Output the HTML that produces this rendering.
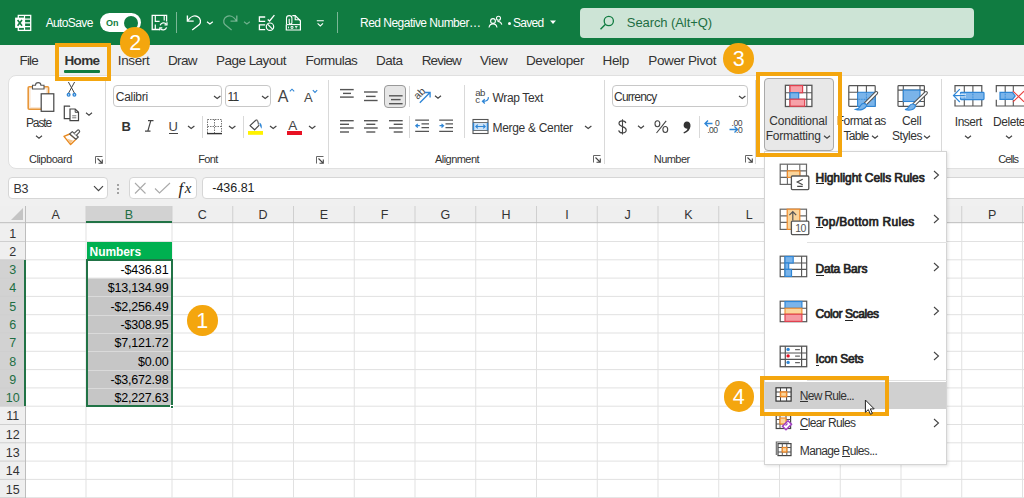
<!DOCTYPE html>
<html><head><meta charset="utf-8">
<style>
*{box-sizing:border-box;margin:0;padding:0}
html,body{width:1024px;height:498px;overflow:hidden;background:#f0f0f0;font-family:"Liberation Sans",sans-serif;color:#222;position:relative}
.a{position:absolute}
.t{position:absolute;white-space:nowrap;line-height:normal}
svg{overflow:visible}
</style></head><body>
<div class="a" style="left:0px;top:0px;width:1024px;height:45.3px;background:#107c41"></div>
<svg class="a" style="left:14px;top:14px" width="18" height="18" viewBox="0 0 18 18">
<rect x="4.3" y="1.4" width="12.4" height="15" fill="none" stroke="#ffffff" stroke-width="1.3"/>
<path d="M10.5 1.4V16.4 M4.3 5.1H16.7 M4.3 8.8H16.7 M4.3 12.6H16.7" stroke="#ffffff" stroke-width="1.2"/>
<rect x="1.1" y="3.6" width="9.4" height="10.3" fill="#ffffff"/>
<path d="M3.6 5.9L8 11.7 M8 5.9L3.6 11.7" stroke="#107c41" stroke-width="1.6"/>
</svg>
<div class="t" style="left:45.70px;top:16.00px;font-size:12px;letter-spacing:-0.630px;color:#ffffff;">AutoSave</div>
<div class="a" style="left:99.7px;top:12.8px;width:41px;height:19px;background:#fff;border-radius:9.5px"></div>
<div class="a" style="left:124px;top:15.7px;width:14px;height:14px;background:#107c41;border-radius:50%"></div>
<div class="t" style="left:106.00px;top:18.00px;font-size:9px;letter-spacing:-0.098px;color:#107c41;font-weight:bold;">On</div>
<svg class="a" style="left:151px;top:14px" width="18" height="18" viewBox="0 0 18 18">
<path d="M9 15.5H1.2V1.3H15.6V7.6" fill="none" stroke="#ffffff" stroke-width="1.3"/>
<path d="M4.3 1.3V7.3H8.6 M13.2 1.3V6.4 M4.3 10.4V15.5" fill="none" stroke="#ffffff" stroke-width="1.2"/>
<path d="M9.2 11.2A3.6 3.6 0 0 1 15.4 10.2 M15.6 13.4A3.6 3.6 0 0 1 9.4 14.6" fill="none" stroke="#ffffff" stroke-width="1.3"/>
<path d="M16 8.3V10.8H13.5 M8.8 16.3V13.8H11.3" fill="none" stroke="#ffffff" stroke-width="1.2"/>
</svg>
<div class="a" style="left:176.2px;top:11.8px;width:1px;height:21.5px;background:rgba(255,255,255,.45)"></div>
<svg class="a" style="left:185px;top:14px" width="18" height="18" viewBox="0 0 18 18">
<path d="M2.4 1.6V7.1H8.7" fill="none" stroke="#ffffff" stroke-width="1.4"/>
<path d="M2.9 6.6C5.3 2.8 9.2 0.9 12.6 2.6C15.8 4.3 16.3 8.2 14.3 10.6L7.2 16" fill="none" stroke="#ffffff" stroke-width="1.3"/>
</svg>
<svg class="a" style="left:206.1px;top:19.700000000000003px" width="7.8" height="5.8" viewBox="0 0 7.8 5.8"><path d="M1 1.74 L3.90 4.06 L6.80 1.74" fill="none" stroke="#ffffff" stroke-width="1.2"/></svg>
<svg class="a" style="left:222px;top:14px" width="18" height="18" viewBox="0 0 18 18">
<path d="M14.8 1.6V7.1H8.5" fill="none" stroke="rgba(255,255,255,.4)" stroke-width="1.4"/>
<path d="M14.3 6.6C11.9 2.8 8 0.9 4.6 2.6C1.4 4.3 0.9 8.2 2.9 10.6L9.6 16" fill="none" stroke="rgba(255,255,255,.4)" stroke-width="1.3"/>
</svg>
<svg class="a" style="left:242.7px;top:19.700000000000003px" width="7.8" height="5.8" viewBox="0 0 7.8 5.8"><path d="M1 1.74 L3.90 4.06 L6.80 1.74" fill="none" stroke="rgba(255,255,255,.4)" stroke-width="1.2"/></svg>
<svg class="a" style="left:258px;top:14px" width="18" height="18" viewBox="0 0 18 18">
<path d="M7.2 3H1.4V7.4H7.2" fill="none" stroke="#ffffff" stroke-width="1.3"/>
<path d="M9.7 5.5L11.6 7L16.4 1.2" fill="none" stroke="#ffffff" stroke-width="1.3"/>
<path d="M7.2 10.9H1.4V15.6H7.2" fill="none" stroke="#ffffff" stroke-width="1.3"/>
<circle cx="12" cy="12.7" r="3.7" fill="none" stroke="#ffffff" stroke-width="1.2"/>
<path d="M9.5 10.2L14.5 15.2" stroke="#ffffff" stroke-width="1.2"/>
</svg>
<svg class="a" style="left:285px;top:14px" width="17" height="18" viewBox="0 0 17 18">
<path d="M7.3 1.6H10.2L15.4 6.8V16H1.3V10.6" fill="none" stroke="#ffffff" stroke-width="1.2"/>
<path d="M10.2 1.6V5.8H15.2" fill="none" stroke="#ffffff" stroke-width="1.1"/>
<path d="M1.5 10V4.3A2.7 2.7 0 0 1 6.9 4.3V8.8A1.35 1.35 0 0 1 4.2 8.8V4.8" fill="none" stroke="#ffffff" stroke-width="1.1"/>
<path d="M1.3 10.6H15.4" stroke="#ffffff" stroke-width="1.1"/>
<path d="M3.5 12.6V14.3 M6 12.5H8V14.3H6Z M10 12.6H12.5 M11.2 12.6V14.4" fill="none" stroke="#ffffff" stroke-width="0.9"/>
</svg>
<svg class="a" style="left:316px;top:18px" width="9" height="10" viewBox="0 0 9 10"><path d="M0.8 2.8H7.8 M1.6 5.4L4.3 8L7 5.4" fill="none" stroke="#ffffff" stroke-width="1.1"/></svg>
<div class="a" style="left:336.5px;top:11.8px;width:1px;height:21.5px;background:rgba(255,255,255,.45)"></div>
<div class="t" style="left:360.00px;top:16.00px;font-size:12px;letter-spacing:-0.516px;color:#ffffff;">Red Negative Number…</div>
<svg class="a" style="left:488px;top:15px" width="15" height="14" viewBox="0 0 15 14">
<circle cx="5" cy="6" r="2.4" fill="none" stroke="#ffffff" stroke-width="1.1"/>
<path d="M1 12.5C1.5 9.8 3 8.9 5 8.9S8.5 9.8 9 12.5" fill="none" stroke="#ffffff" stroke-width="1.1"/>
<circle cx="10.5" cy="3.2" r="2" fill="none" stroke="#ffffff" stroke-width="1.1"/>
<path d="M9.5 6.5C11.8 6.3 13.3 7.3 13.8 9.6" fill="none" stroke="#ffffff" stroke-width="1.1"/>
</svg>
<div class="a" style="left:507.5px;top:21.5px;width:3px;height:3px;background:#fff;border-radius:50%"></div>
<div class="t" style="left:513.00px;top:16.00px;font-size:12px;letter-spacing:-0.685px;color:#ffffff;">Saved</div>
<svg class="a" style="left:549px;top:19px" width="8" height="6" viewBox="0 0 8 6"><path d="M1 1.5H7L4 5Z" fill="#ffffff"/></svg>
<div class="a" style="left:579.8px;top:7.5px;width:394.6px;height:30.2px;background:#cde4d6;border-radius:4px"></div>
<svg class="a" style="left:599px;top:15px" width="16" height="16" viewBox="0 0 16 16">
<circle cx="9.8" cy="6" r="4.6" fill="none" stroke="#107c41" stroke-width="1.3"/>
<path d="M6.5 9.3L1.5 14.3" stroke="#107c41" stroke-width="1.4"/>
</svg>
<div class="t" style="left:626.80px;top:15.00px;font-size:13px;letter-spacing:-0.081px;color:#1e6e43;">Search (Alt+Q)</div>
<div class="t" style="left:19.50px;top:53.00px;font-size:13.5px;letter-spacing:-0.864px;color:#333;">File</div>
<div class="t" style="left:64.50px;top:53.00px;font-size:13.5px;letter-spacing:-0.627px;color:#333;font-weight:bold;">Home</div>
<div class="t" style="left:117.80px;top:53.00px;font-size:13.5px;letter-spacing:-0.360px;color:#333;">Insert</div>
<div class="t" style="left:168.00px;top:53.00px;font-size:13.5px;letter-spacing:-0.626px;color:#333;">Draw</div>
<div class="t" style="left:216.00px;top:53.00px;font-size:13.5px;letter-spacing:-0.528px;color:#333;">Page Layout</div>
<div class="t" style="left:305.50px;top:53.00px;font-size:13.5px;letter-spacing:-0.558px;color:#333;">Formulas</div>
<div class="t" style="left:376.00px;top:53.00px;font-size:13.5px;letter-spacing:-0.479px;color:#333;">Data</div>
<div class="t" style="left:421.70px;top:53.00px;font-size:13.5px;letter-spacing:-0.828px;color:#333;">Review</div>
<div class="t" style="left:480.00px;top:53.00px;font-size:13.5px;letter-spacing:-0.405px;color:#333;">View</div>
<div class="t" style="left:526.00px;top:53.00px;font-size:13.5px;letter-spacing:-0.393px;color:#333;">Developer</div>
<div class="t" style="left:602.60px;top:53.00px;font-size:13.5px;letter-spacing:-0.391px;color:#333;">Help</div>
<div class="t" style="left:648.30px;top:53.00px;font-size:13.5px;letter-spacing:-0.393px;color:#333;">Power Pivot</div>
<div class="a" style="left:64px;top:70.4px;width:36px;height:2.6px;background:#107c41;border-radius:1px"></div>
<div class="a" style="left:8px;top:75px;width:1040px;height:93.5px;background:#fff;border:1px solid #e0e0e0;border-radius:8px"></div>
<svg class="a" style="left:26px;top:81px" width="30" height="32" viewBox="0 0 30 32">
<rect x="2.2" y="5.8" width="20.4" height="22.5" rx="1" fill="#fbe7d3" stroke="#e8973a" stroke-width="1.6"/>
<rect x="4.6" y="8" width="15.6" height="18" fill="#fff"/>
<path d="M6.5 8V4.3H9.5a2.7 2.7 0 0 1 5.4 0H18V8Z" fill="#fff" stroke="#555" stroke-width="1.1"/>
<rect x="15.2" y="12.8" width="12.6" height="17.5" fill="#fff" stroke="#444" stroke-width="1.2"/>
</svg>
<div class="t" style="left:26.00px;top:116.00px;font-size:12px;letter-spacing:-1.137px;color:#333;">Paste</div>
<svg class="a" style="left:34.5px;top:133.6px" width="8" height="6" viewBox="0 0 8 6"><path d="M1 1.80 L4.00 4.20 L7.00 1.80" fill="none" stroke="#444" stroke-width="1.1"/></svg>
<svg class="a" style="left:65px;top:82px" width="13" height="15" viewBox="0 0 13 15">
<path d="M3.6 11L9.6 0 M9.4 11L3.4 0" stroke="#444" stroke-width="1"/>
<circle cx="3.6" cy="12.8" r="2" fill="#2f86d6"/><circle cx="9.4" cy="12.8" r="2" fill="#2f86d6"/>
<circle cx="3.6" cy="12.8" r="0.6" fill="#fff"/><circle cx="9.4" cy="12.8" r="0.6" fill="#fff"/>
</svg>
<svg class="a" style="left:63px;top:105px" width="17" height="17" viewBox="0 0 17 17">
<path d="M7 13.6H1.3V1.2H6.5L7 1.7" fill="none" stroke="#444" stroke-width="1.2"/>
<path d="M7 4H12.2L15.5 7.3V15.7H7Z" fill="#fff" stroke="#444" stroke-width="1.2"/>
<path d="M12.2 4V7.3H15.5" fill="none" stroke="#444" stroke-width="1"/>
<path d="M9.2 10.8H13.3 M9.2 12.8H13.3" stroke="#666" stroke-width="0.9"/>
</svg>
<svg class="a" style="left:85px;top:110.8px" width="8" height="6" viewBox="0 0 8 6"><path d="M1 1.80 L4.00 4.20 L7.00 1.80" fill="none" stroke="#444" stroke-width="1.1"/></svg>
<svg class="a" style="left:63px;top:129px" width="17" height="17" viewBox="0 0 17 17">
<path d="M1 7.4L6.7 5L12.9 10.3L7.6 15.6Z" fill="#fff" stroke="#e8891f" stroke-width="1.4" stroke-linejoin="round"/>
<path d="M3.5 9.5L10 11.5L7.6 14.5Z" fill="#f5c48a"/>
<path d="M6.7 5L9.3 2.6L15.3 8L12.9 10.3Z" fill="#fff" stroke="#555" stroke-width="1.2" stroke-linejoin="round"/>
<path d="M11.2 4.4L14.3 1.4A1.3 1.3 0 0 1 16.2 3.3L13.3 6.3" fill="#fff" stroke="#555" stroke-width="1.2"/>
</svg>
<div class="t" style="left:28.90px;top:153.00px;font-size:11px;letter-spacing:-0.453px;color:#333;">Clipboard</div>
<svg class="a" style="left:95px;top:155.5px" width="8" height="8" viewBox="0 0 8 8"><path d="M0.5 7.5V0.5H7.5" fill="none" stroke="#666" stroke-width="1"/><path d="M2.5 2.5L7 7 M3.5 7.3H7.3V3.5" fill="none" stroke="#444" stroke-width="1.1"/></svg>
<div class="a" style="left:104.5px;top:80px;width:1px;height:83.5px;background:#d9d9d9"></div>
<div class="a" style="left:113.3px;top:85.4px;width:109px;height:22px;background:#fff;border:1px solid #c8c8c8;border-radius:4px"></div>
<div class="t" style="left:115.80px;top:90.00px;font-size:12px;letter-spacing:-0.287px;color:#333;">Calibri</div>
<svg class="a" style="left:212.8px;top:94.1px" width="8.4" height="6.4" viewBox="0 0 8.4 6.4"><path d="M1 1.92 L4.20 4.48 L7.40 1.92" fill="none" stroke="#444" stroke-width="1.2"/></svg>
<div class="a" style="left:224.5px;top:85.4px;width:46.7px;height:22px;background:#fff;border:1px solid #c8c8c8;border-radius:4px"></div>
<div class="t" style="left:227.40px;top:90.00px;font-size:12px;letter-spacing:-0.728px;color:#333;">11</div>
<svg class="a" style="left:261.40000000000003px;top:94.1px" width="8.4" height="6.4" viewBox="0 0 8.4 6.4"><path d="M1 1.92 L4.20 4.48 L7.40 1.92" fill="none" stroke="#444" stroke-width="1.2"/></svg>
<div class="t" style="left:277.80px;top:88.00px;font-size:16px;letter-spacing:0.000px;color:#444;">A</div>
<svg class="a" style="left:288.5px;top:87.5px" width="6" height="4" viewBox="0 0 6 4"><path d="M0.8 3.4L3 1.2L5.2 3.4" fill="none" stroke="#2f86d6" stroke-width="1.1"/></svg>
<div class="t" style="left:304.00px;top:90.00px;font-size:13px;letter-spacing:0.000px;color:#444;">A</div>
<svg class="a" style="left:312px;top:88.5px" width="6" height="4" viewBox="0 0 6 4"><path d="M0.8 1.2L3 3.4L5.2 1.2" fill="none" stroke="#2f86d6" stroke-width="1.1"/></svg>
<div class="t" style="left:121.50px;top:119.00px;font-size:13px;letter-spacing:0.000px;color:#333;font-weight:bold;">B</div>
<svg class="a" style="left:143px;top:119px" width="12" height="14" viewBox="0 0 12 14"><path d="M5 1.6H10.5 M2 12.2H7.5 M7.8 1.6L4.8 12.2" fill="none" stroke="#444" stroke-width="1.2"/></svg>
<div class="t" style="left:168.60px;top:119.00px;font-size:13px;letter-spacing:0.000px;color:#444;">U</div>
<div class="a" style="left:168.6px;top:132.6px;width:9px;height:1px;background:#444"></div>
<svg class="a" style="left:186.8px;top:124.1px" width="8.4" height="6.4" viewBox="0 0 8.4 6.4"><path d="M1 1.92 L4.20 4.48 L7.40 1.92" fill="none" stroke="#444" stroke-width="1.2"/></svg>
<div class="a" style="left:201.6px;top:116.4px;width:1px;height:22.0px;background:#d9d9d9"></div>
<svg class="a" style="left:206px;top:118px" width="17" height="17" viewBox="0 0 17 17">
<rect x="1.5" y="1.5" width="14" height="14" fill="none" stroke="#777" stroke-width="1" stroke-dasharray="1.5 1"/>
<path d="M8.5 1.5V15.5 M1.5 8.5H15.5" stroke="#777" stroke-width="1" stroke-dasharray="1.5 1"/>
<path d="M1 15.6H16" stroke="#333" stroke-width="1.4"/>
</svg>
<svg class="a" style="left:228.20000000000002px;top:124.1px" width="8.4" height="6.4" viewBox="0 0 8.4 6.4"><path d="M1 1.92 L4.20 4.48 L7.40 1.92" fill="none" stroke="#444" stroke-width="1.2"/></svg>
<div class="a" style="left:242.5px;top:116.4px;width:1px;height:22.0px;background:#d9d9d9"></div>
<svg class="a" style="left:247px;top:119px" width="18" height="17" viewBox="0 0 18 17">
<path d="M8.8 1.2L3 6.6L7.6 10.8L12.2 6.2" fill="#fff" stroke="#444" stroke-width="1.2" stroke-linejoin="round"/>
<path d="M8.8 1.2C10 0.6 11.2 2 11.6 5.6" fill="none" stroke="#777" stroke-width="1.4"/>
<path d="M12.4 3.8C14.6 4.4 15.2 7.4 14.5 9.8C13.6 8.2 12.6 6.4 12.4 3.8Z" fill="#2f86d6"/>
<rect x="1" y="12" width="15" height="3.8" fill="#fff200"/>
</svg>
<svg class="a" style="left:268.8px;top:124.1px" width="8.4" height="6.4" viewBox="0 0 8.4 6.4"><path d="M1 1.92 L4.20 4.48 L7.40 1.92" fill="none" stroke="#444" stroke-width="1.2"/></svg>
<div class="t" style="left:288.30px;top:118.00px;font-size:13.5px;letter-spacing:0.000px;color:#444;">A</div>
<div class="a" style="left:287px;top:131.3px;width:15px;height:3.6px;background:#e81123"></div>
<svg class="a" style="left:307.8px;top:124.1px" width="8.4" height="6.4" viewBox="0 0 8.4 6.4"><path d="M1 1.92 L4.20 4.48 L7.40 1.92" fill="none" stroke="#444" stroke-width="1.2"/></svg>
<div class="t" style="left:198.20px;top:153.00px;font-size:11px;letter-spacing:-0.602px;color:#333;">Font</div>
<svg class="a" style="left:316px;top:155.5px" width="8" height="8" viewBox="0 0 8 8"><path d="M0.5 7.5V0.5H7.5" fill="none" stroke="#666" stroke-width="1"/><path d="M2.5 2.5L7 7 M3.5 7.3H7.3V3.5" fill="none" stroke="#444" stroke-width="1.1"/></svg>
<div class="a" style="left:327.5px;top:80px;width:1px;height:83.5px;background:#d9d9d9"></div>
<svg class="a" style="left:340px;top:0px" width="16" height="200" viewBox="0 0 16 200"><path d="M0 89.6H13.7" stroke="#555" stroke-width="1.4"/><path d="M3 93.4H11" stroke="#555" stroke-width="1.4"/><path d="M0 97.1H13.7" stroke="#555" stroke-width="1.4"/></svg>
<svg class="a" style="left:364.2px;top:0px" width="16" height="200" viewBox="0 0 16 200"><path d="M0 92H13.6" stroke="#555" stroke-width="1.4"/><path d="M2 96.4H11.6" stroke="#555" stroke-width="1.4"/><path d="M0 100.5H13.6" stroke="#555" stroke-width="1.4"/></svg>
<div class="a" style="left:384.4px;top:85.4px;width:22.1px;height:22.3px;background:#e6e6e6;border:1px solid #999;border-radius:4px"></div>
<svg class="a" style="left:388.8px;top:0px" width="16" height="200" viewBox="0 0 16 200"><path d="M0 95.8H13.6" stroke="#555" stroke-width="1.4"/><path d="M2 99.6H11.6" stroke="#555" stroke-width="1.4"/><path d="M0 103.7H13.6" stroke="#555" stroke-width="1.4"/></svg>
<div class="a" style="left:409px;top:86px;width:1px;height:21px;background:#d9d9d9"></div>
<svg class="a" style="left:413px;top:86px" width="20" height="19" viewBox="0 0 20 19">
<text x="6.5" y="11" font-size="10.5" font-family="Liberation Sans" fill="#444" text-anchor="middle" transform="rotate(-45 6.5 7.5)">ab</text>
<path d="M6.8 16.8L16.8 6.8 M12 6.5H17.1V11.6" fill="none" stroke="#2f86d6" stroke-width="1.3"/>
</svg>
<svg class="a" style="left:434.2px;top:93.8px" width="8" height="6" viewBox="0 0 8 6"><path d="M1 1.80 L4.00 4.20 L7.00 1.80" fill="none" stroke="#444" stroke-width="1.2"/></svg>
<svg class="a" style="left:340px;top:0px" width="16" height="200" viewBox="0 0 16 200"><path d="M0 120.7H13.7" stroke="#555" stroke-width="1.4"/><path d="M0 124.3H9" stroke="#555" stroke-width="1.4"/><path d="M0 128H13.7" stroke="#555" stroke-width="1.4"/><path d="M0 132H9" stroke="#555" stroke-width="1.4"/></svg>
<svg class="a" style="left:364.2px;top:0px" width="16" height="200" viewBox="0 0 16 200"><path d="M0 120.7H13.7" stroke="#555" stroke-width="1.4"/><path d="M2.3 124.3H11.3" stroke="#555" stroke-width="1.4"/><path d="M0 128H13.7" stroke="#555" stroke-width="1.4"/><path d="M2.3 132H11.3" stroke="#555" stroke-width="1.4"/></svg>
<svg class="a" style="left:388.8px;top:0px" width="16" height="200" viewBox="0 0 16 200"><path d="M0 120.7H13.7" stroke="#555" stroke-width="1.4"/><path d="M4.7 124.3H13.7" stroke="#555" stroke-width="1.4"/><path d="M0 128H13.7" stroke="#555" stroke-width="1.4"/><path d="M4.7 132H13.7" stroke="#555" stroke-width="1.4"/></svg>
<div class="a" style="left:409px;top:115.6px;width:1px;height:22.700000000000017px;background:#d9d9d9"></div>
<svg class="a" style="left:414px;top:118px" width="17" height="16" viewBox="0 0 17 16">
<path d="M1.2 2.2H15 M7.5 5.8H15 M7.5 9.6H15 M1.2 13.3H15" stroke="#555" stroke-width="1.2"/>
<path d="M1.8 7.7H5.8 M3.8 5.9L1.8 7.7L3.8 9.5" fill="none" stroke="#2f86d6" stroke-width="1.2"/>
</svg>
<svg class="a" style="left:438px;top:118px" width="17" height="16" viewBox="0 0 17 16">
<path d="M1.2 2.2H15 M7.5 5.8H15 M7.5 9.6H15 M1.2 13.3H15" stroke="#555" stroke-width="1.2"/>
<path d="M1.5 7.7H5.5 M3.5 5.9L5.5 7.7L3.5 9.5" fill="none" stroke="#2f86d6" stroke-width="1.2"/>
</svg>
<div class="a" style="left:463.7px;top:85.4px;width:1px;height:52.599999999999994px;background:#d9d9d9"></div>
<svg class="a" style="left:474px;top:89px" width="17" height="16" viewBox="0 0 17 16">
<text x="1.2" y="7.4" font-size="9.6" font-family="Liberation Sans" fill="#444" letter-spacing="-0.4">ab</text>
<text x="1.2" y="14.4" font-size="9.6" font-family="Liberation Sans" fill="#444">c</text>
<path d="M14.3 8.2C14.8 10.8 12.6 12.6 9 12.3 M10.8 10.2L8.5 12.3L10.8 14.4" fill="none" stroke="#2f86d6" stroke-width="1.3"/>
</svg>
<div class="t" style="left:492.50px;top:91.00px;font-size:12px;letter-spacing:-0.342px;color:#333;">Wrap Text</div>
<svg class="a" style="left:472px;top:118px" width="17" height="17" viewBox="0 0 17 17">
<rect x="1" y="1.5" width="15" height="14" fill="#fff" stroke="#555" stroke-width="1.1"/>
<path d="M1 4.5H16 M1 12.5H16" stroke="#555" stroke-width="1"/>
<rect x="1.5" y="4.8" width="14" height="7.4" fill="#cfe3f6"/>
<path d="M1.5 4.8V12.2 M15.5 4.8V12.2" stroke="#2f86d6" stroke-width="1.4"/>
<path d="M4 8.5H13 M5.8 6.6L3.8 8.5L5.8 10.4 M11.2 6.6L13.2 8.5L11.2 10.4" fill="none" stroke="#2f86d6" stroke-width="1.1"/>
</svg>
<div class="t" style="left:492.50px;top:121.00px;font-size:12px;letter-spacing:-0.315px;color:#333;">Merge &amp; Center</div>
<svg class="a" style="left:583.8px;top:124.1px" width="8.4" height="6.4" viewBox="0 0 8.4 6.4"><path d="M1 1.92 L4.20 4.48 L7.40 1.92" fill="none" stroke="#444" stroke-width="1.2"/></svg>
<div class="t" style="left:435.00px;top:153.00px;font-size:11px;letter-spacing:-0.546px;color:#333;">Alignment</div>
<svg class="a" style="left:593px;top:155.3px" width="8" height="8" viewBox="0 0 8 8"><path d="M0.5 7.5V0.5H7.5" fill="none" stroke="#666" stroke-width="1"/><path d="M2.5 2.5L7 7 M3.5 7.3H7.3V3.5" fill="none" stroke="#444" stroke-width="1.1"/></svg>
<div class="a" style="left:603.5px;top:80px;width:1px;height:83.5px;background:#d9d9d9"></div>
<div class="a" style="left:612.3px;top:85.4px;width:136.2px;height:21.7px;background:#fff;border:1px solid #c8c8c8;border-radius:4px"></div>
<div class="t" style="left:614.00px;top:90.00px;font-size:12px;letter-spacing:-0.760px;color:#333;">Currency</div>
<svg class="a" style="left:738.3px;top:94.1px" width="8.4" height="6.4" viewBox="0 0 8.4 6.4"><path d="M1 1.92 L4.20 4.48 L7.40 1.92" fill="none" stroke="#444" stroke-width="1.2"/></svg>
<svg class="a" style="left:616px;top:118px" width="13" height="18" viewBox="0 0 13 18">
<path d="M9.8 5.2C9.5 3.5 8.2 2.9 6.4 2.9C4.4 2.9 3 3.9 3 5.6C3 9.3 10.2 7.9 10.2 12C10.2 13.9 8.6 14.9 6.5 14.9C4.4 14.9 3 14 2.7 12.3" fill="none" stroke="#444" stroke-width="1.15"/>
<path d="M6.5 1.3V16.5" stroke="#444" stroke-width="1.1"/>
</svg>
<svg class="a" style="left:636.6px;top:124px" width="8" height="6" viewBox="0 0 8 6"><path d="M1 1.80 L4.00 4.20 L7.00 1.80" fill="none" stroke="#444" stroke-width="1.2"/></svg>
<svg class="a" style="left:654px;top:120px" width="15" height="14" viewBox="0 0 15 14">
<ellipse cx="3.4" cy="3.7" rx="2.4" ry="3" fill="none" stroke="#444" stroke-width="1.1"/>
<ellipse cx="11.3" cy="9.5" rx="2.4" ry="3" fill="none" stroke="#444" stroke-width="1.1"/>
<path d="M12.2 0.8L2.5 13" stroke="#444" stroke-width="1.1"/>
</svg>
<svg class="a" style="left:681px;top:120px" width="11" height="15" viewBox="0 0 11 15">
<path d="M5.8 1.5C8.2 1.5 9.8 3.2 9.5 6.2C9.2 9.5 6.8 12.3 3 13.5L2.4 12.6C4.8 11.4 6.2 10 6.5 8.8C4.2 8.8 2.6 7.2 2.6 5.2C2.6 3 4 1.5 5.8 1.5Z" fill="#333"/>
</svg>
<div class="a" style="left:699.4px;top:116px;width:1px;height:22px;background:#d9d9d9"></div>
<svg class="a" style="left:703px;top:118px" width="19" height="17" viewBox="0 0 19 17">
<path d="M2 5.5H9.5 M5 2.5L2 5.5L5 8.5" fill="none" stroke="#2f86d6" stroke-width="1.4"/>
<text x="12" y="7.6" font-size="8.6" font-family="Liberation Sans" fill="#444">0</text>
<text x="4.2" y="15.2" font-size="8.6" font-family="Liberation Sans" fill="#444" letter-spacing="-0.5">.00</text>
</svg>
<svg class="a" style="left:728px;top:118px" width="19" height="17" viewBox="0 0 19 17">
<text x="3.5" y="7.6" font-size="8.6" font-family="Liberation Sans" fill="#444" letter-spacing="-0.5">.00</text>
<path d="M1.5 11.5H9.5 M6.5 8.5L9.5 11.5L6.5 14.5" fill="none" stroke="#2f86d6" stroke-width="1.4"/>
<text x="8" y="15.2" font-size="8.6" font-family="Liberation Sans" fill="#444" letter-spacing="-0.5">.0</text>
</svg>
<div class="t" style="left:653.80px;top:153.00px;font-size:11px;letter-spacing:-0.553px;color:#333;">Number</div>
<svg class="a" style="left:745px;top:155.3px" width="8" height="8" viewBox="0 0 8 8"><path d="M0.5 7.5V0.5H7.5" fill="none" stroke="#666" stroke-width="1"/><path d="M2.5 2.5L7 7 M3.5 7.3H7.3V3.5" fill="none" stroke="#444" stroke-width="1.1"/></svg>
<div class="a" style="left:755px;top:80px;width:1px;height:83.5px;background:#d9d9d9"></div>
<div class="a" style="left:764.2px;top:77.5px;width:69.8px;height:73px;background:#e8e8e8;border:1px solid #aaa;border-radius:4px"></div>
<svg class="a" style="left:784px;top:84px" width="29" height="23" viewBox="0 0 29 23">
<rect x="1.4" y="1.3" width="26.5" height="21.2" fill="#fff" stroke="#555" stroke-width="1.3"/>
<path d="M6 1.3V22.5 M22.8 1.3V22.5 M1.4 8.7H27.9 M1.4 15.2H27.9" stroke="#555" stroke-width="1.1"/>
<rect x="6" y="1.6" width="12.6" height="7.1" fill="#f7a1a8" stroke="#e0414f" stroke-width="1.2"/>
<rect x="6" y="8.7" width="8.7" height="6.5" fill="#7ab4ea" stroke="#2f86d6" stroke-width="1.2"/>
<rect x="6" y="15.2" width="14.7" height="7" fill="#f7a1a8" stroke="#e0414f" stroke-width="1.2"/>
</svg>
<div class="t" style="left:769.20px;top:114.00px;font-size:12px;letter-spacing:-0.185px;color:#333;">Conditional</div>
<div class="t" style="left:765.70px;top:129.00px;font-size:12px;letter-spacing:-0.245px;color:#333;">Formatting</div>
<svg class="a" style="left:822.5px;top:133.5px" width="8" height="6" viewBox="0 0 8 6"><path d="M1 1.80 L4.00 4.20 L7.00 1.80" fill="none" stroke="#444" stroke-width="1.2"/></svg>
<svg class="a" style="left:848px;top:84px" width="31" height="28" viewBox="0 0 31 28">
<rect x="0.8" y="1.7" width="26.4" height="20.7" rx="0.8" fill="#fff" stroke="#555" stroke-width="1.2"/>
<rect x="9.6" y="8.3" width="17.6" height="14.1" fill="#7ab4ea" stroke="#2f86d6" stroke-width="1.1"/>
<path d="M9.6 1.7V8.3 M18.4 1.7V8.3 M0.8 8.3H9.6 M0.8 15.3H9.6" stroke="#555" stroke-width="1.1"/>
<path d="M18.4 8.3V22.4 M9.6 15.3H27.2" stroke="#2f86d6" stroke-width="0.9" stroke-dasharray="1 0.6"/>
<path d="M28.3 8.9L17.6 19.6" stroke="#555" stroke-width="3.8" stroke-linecap="round"/>
<path d="M28.3 8.9L17.6 19.6" stroke="#fff" stroke-width="1.6" stroke-linecap="round"/>
<path d="M18.8 21.2C17.4 18.6 13.8 18.8 12.6 21.4C11.6 23.6 10.2 24.8 7.8 25.4C12 26.6 17.8 25.6 18.8 21.2Z" fill="#7ab4ea" stroke="#2f86d6" stroke-width="1.1"/>
</svg>
<div class="t" style="left:836.80px;top:114.00px;font-size:12px;letter-spacing:-0.557px;color:#333;">Format as</div>
<div class="t" style="left:843.50px;top:129.00px;font-size:12px;letter-spacing:-0.737px;color:#333;">Table</div>
<svg class="a" style="left:871px;top:133.5px" width="8" height="6" viewBox="0 0 8 6"><path d="M1 1.80 L4.00 4.20 L7.00 1.80" fill="none" stroke="#444" stroke-width="1.2"/></svg>
<svg class="a" style="left:897px;top:84px" width="31" height="28" viewBox="0 0 31 28">
<rect x="1" y="1.7" width="26.4" height="20.7" rx="0.8" fill="#fff" stroke="#555" stroke-width="1.2"/>
<path d="M6.3 1.7V22.4 M23 1.7V6.1 M1 6.1H27.4 M1 17.5H27.4" stroke="#555" stroke-width="1.1"/>
<rect x="6.3" y="6.1" width="16.7" height="11.4" fill="#7ab4ea" stroke="#2f86d6" stroke-width="1.1"/>
<path d="M29 8.9L17.2 20.4" stroke="#555" stroke-width="3.8" stroke-linecap="round"/>
<path d="M29 8.9L17.2 20.4" stroke="#fff" stroke-width="1.6" stroke-linecap="round"/>
<path d="M18.6 21.8C17.2 19.2 13.6 19.4 12.4 22C11.4 24.2 10.4 25 8 25.5C12.2 26.7 17.6 26.2 18.6 21.8Z" fill="#7ab4ea" stroke="#2f86d6" stroke-width="1.1"/>
</svg>
<div class="t" style="left:902.00px;top:114.00px;font-size:12px;letter-spacing:-0.368px;color:#333;">Cell</div>
<div class="t" style="left:892.00px;top:129.00px;font-size:12px;letter-spacing:-0.446px;color:#333;">Styles</div>
<svg class="a" style="left:922.5px;top:133.5px" width="8" height="6" viewBox="0 0 8 6"><path d="M1 1.80 L4.00 4.20 L7.00 1.80" fill="none" stroke="#444" stroke-width="1.2"/></svg>
<div class="a" style="left:940.5px;top:79px;width:1px;height:84.5px;background:#d9d9d9"></div>
<svg class="a" style="left:952px;top:84px" width="33" height="23" viewBox="0 0 33 23">
<path d="M3 8.2V1.6H29.8V8.2 M3 15.7V22H29.8V15.7" fill="#fff" stroke="#555" stroke-width="1.2"/>
<path d="M12.3 1.6V22 M20.9 1.6V22" stroke="#555" stroke-width="1.1"/>
<rect x="8.5" y="8.4" width="23.5" height="7.2" rx="0.8" fill="#7ab4ea" stroke="#2f86d6" stroke-width="1.2"/>
<path d="M20.9 8.4V15.6 M12.3 8.4V15.6" stroke="#2f86d6" stroke-width="0.9" stroke-dasharray="1 0.6"/>
<path d="M7.8 5.2L1.5 11.6L7.8 18 M2 11.6H12.5" fill="none" stroke="#2f86d6" stroke-width="1.2"/>
<path d="M5.5 10.3H14 M5.5 12.9H14" stroke="#fff" stroke-width="0.8"/>
</svg>
<div class="t" style="left:954.80px;top:115.00px;font-size:12px;letter-spacing:-0.502px;color:#333;">Insert</div>
<svg class="a" style="left:964px;top:133.6px" width="8" height="6" viewBox="0 0 8 6"><path d="M1 1.80 L4.00 4.20 L7.00 1.80" fill="none" stroke="#444" stroke-width="1.2"/></svg>
<svg class="a" style="left:995px;top:84px" width="33" height="23" viewBox="0 0 33 23">
<path d="M1.3 8.2V1.6H31V8.2 M1.3 15.7V22H31V15.7" fill="#fff" stroke="#555" stroke-width="1.2"/>
<path d="M10.2 1.6V22 M18.3 1.6V8.2 M18.3 15.7V22" stroke="#555" stroke-width="1.1"/>
<path d="M5 8.4H17.5L20.2 11.9L17.5 15.4H5Z" fill="#7ab4ea" stroke="#2f86d6" stroke-width="1.2"/>
<path d="M10.2 8.4V15.4" stroke="#2f86d6" stroke-width="0.9" stroke-dasharray="1 0.6"/>
<path d="M18 7.2L29 17.8 M29 7.2L18 17.8" stroke="#e8413f" stroke-width="1.1"/>
</svg>
<div class="t" style="left:993.00px;top:115.00px;font-size:12px;letter-spacing:-0.448px;color:#333;">Delete</div>
<svg class="a" style="left:1005px;top:133.6px" width="8" height="6" viewBox="0 0 8 6"><path d="M1 1.80 L4.00 4.20 L7.00 1.80" fill="none" stroke="#444" stroke-width="1.2"/></svg>
<div class="t" style="left:998.20px;top:153.00px;font-size:11px;letter-spacing:-0.890px;color:#333;">Cells</div>
<div class="a" style="left:8.2px;top:177px;width:100.2px;height:22px;background:#fff;border:1px solid #d6d6d6;border-radius:4px"></div>
<div class="t" style="left:13.50px;top:182.00px;font-size:12.5px;letter-spacing:-0.395px;color:#333;">B3</div>
<svg class="a" style="left:93px;top:185px" width="11" height="7" viewBox="0 0 11 7"><path d="M1 1.2L5.5 5.7L10 1.2" fill="none" stroke="#444" stroke-width="1.2"/></svg>
<div class="a" style="left:117px;top:183.7px;width:2px;height:2px;background:#888;border-radius:50%"></div>
<div class="a" style="left:117px;top:187.7px;width:2px;height:2px;background:#888;border-radius:50%"></div>
<div class="a" style="left:117px;top:191.7px;width:2px;height:2px;background:#888;border-radius:50%"></div>
<div class="a" style="left:128.5px;top:177px;width:68.8px;height:22px;background:#fff;border:1px solid #d6d6d6;border-radius:4px"></div>
<svg class="a" style="left:134px;top:182px" width="13" height="13" viewBox="0 0 13 13"><path d="M1 1L11.5 11.5 M11.5 1L1 11.5" stroke="#aaa" stroke-width="1.1"/></svg>
<svg class="a" style="left:154px;top:182px" width="17" height="12" viewBox="0 0 17 12"><path d="M1 6.5L5.5 11L16 1" fill="none" stroke="#aaa" stroke-width="1.1"/></svg>
<div class="t" style="left:178.50px;top:179.00px;font-size:17px;letter-spacing:0.000px;color:#222;font-family:'Liberation Serif',serif;font-style:italic;">f</div>
<div class="t" style="left:184.80px;top:180.00px;font-size:15px;letter-spacing:0.000px;color:#222;font-family:'Liberation Serif',serif;font-style:italic;">x</div>
<div class="a" style="left:201.8px;top:177px;width:840px;height:22px;background:#fff;border:1px solid #d6d6d6;border-radius:4px"></div>
<div class="t" style="left:212.30px;top:181.00px;font-size:12.5px;letter-spacing:-0.028px;color:#222;">-436.81</div>
<div class="a" style="left:0px;top:206px;width:1024px;height:17.19999999999999px;background:#efefef"></div>
<div class="a" style="left:25.5px;top:223.2px;width:1000px;height:274.8px;background:#fff"></div>
<div class="a" style="left:0px;top:223.2px;width:25.5px;height:274.8px;background:#efefef"></div>
<div class="a" style="left:86px;top:206px;width:86px;height:17.19999999999999px;background:#d2d2d2"></div>
<div class="a" style="left:0px;top:259.8px;width:24.5px;height:146.4px;background:#d2d2d2"></div>
<svg class="a" style="left:0;top:0" width="1024" height="498">
<path d="M25.5 223.2V498" stroke="#e1e1e1" stroke-width="1"/>
<path d="M25.5 206V223.2" stroke="#cfcfcf" stroke-width="1"/>
<path d="M86 223.2V498" stroke="#e1e1e1" stroke-width="1"/>
<path d="M86 206V223.2" stroke="#cfcfcf" stroke-width="1"/>
<path d="M172 223.2V498" stroke="#e1e1e1" stroke-width="1"/>
<path d="M172 206V223.2" stroke="#cfcfcf" stroke-width="1"/>
<path d="M232.75 223.2V498" stroke="#e1e1e1" stroke-width="1"/>
<path d="M232.75 206V223.2" stroke="#cfcfcf" stroke-width="1"/>
<path d="M293.5 223.2V498" stroke="#e1e1e1" stroke-width="1"/>
<path d="M293.5 206V223.2" stroke="#cfcfcf" stroke-width="1"/>
<path d="M354.25 223.2V498" stroke="#e1e1e1" stroke-width="1"/>
<path d="M354.25 206V223.2" stroke="#cfcfcf" stroke-width="1"/>
<path d="M415.0 223.2V498" stroke="#e1e1e1" stroke-width="1"/>
<path d="M415.0 206V223.2" stroke="#cfcfcf" stroke-width="1"/>
<path d="M475.75 223.2V498" stroke="#e1e1e1" stroke-width="1"/>
<path d="M475.75 206V223.2" stroke="#cfcfcf" stroke-width="1"/>
<path d="M536.5 223.2V498" stroke="#e1e1e1" stroke-width="1"/>
<path d="M536.5 206V223.2" stroke="#cfcfcf" stroke-width="1"/>
<path d="M597.25 223.2V498" stroke="#e1e1e1" stroke-width="1"/>
<path d="M597.25 206V223.2" stroke="#cfcfcf" stroke-width="1"/>
<path d="M658.0 223.2V498" stroke="#e1e1e1" stroke-width="1"/>
<path d="M658.0 206V223.2" stroke="#cfcfcf" stroke-width="1"/>
<path d="M718.75 223.2V498" stroke="#e1e1e1" stroke-width="1"/>
<path d="M718.75 206V223.2" stroke="#cfcfcf" stroke-width="1"/>
<path d="M779.5 223.2V498" stroke="#e1e1e1" stroke-width="1"/>
<path d="M779.5 206V223.2" stroke="#cfcfcf" stroke-width="1"/>
<path d="M840.25 223.2V498" stroke="#e1e1e1" stroke-width="1"/>
<path d="M840.25 206V223.2" stroke="#cfcfcf" stroke-width="1"/>
<path d="M901.0 223.2V498" stroke="#e1e1e1" stroke-width="1"/>
<path d="M901.0 206V223.2" stroke="#cfcfcf" stroke-width="1"/>
<path d="M961.75 223.2V498" stroke="#e1e1e1" stroke-width="1"/>
<path d="M961.75 206V223.2" stroke="#cfcfcf" stroke-width="1"/>
<path d="M1022.5 223.2V498" stroke="#e1e1e1" stroke-width="1"/>
<path d="M1022.5 206V223.2" stroke="#cfcfcf" stroke-width="1"/>
<path d="M1083.25 223.2V498" stroke="#e1e1e1" stroke-width="1"/>
<path d="M1083.25 206V223.2" stroke="#cfcfcf" stroke-width="1"/>
<path d="M25.5 241.50H1024" stroke="#e1e1e1" stroke-width="1"/>
<path d="M0 241.50H25.5" stroke="#cfcfcf" stroke-width="1"/>
<path d="M25.5 259.80H1024" stroke="#e1e1e1" stroke-width="1"/>
<path d="M0 259.80H25.5" stroke="#cfcfcf" stroke-width="1"/>
<path d="M25.5 278.10H1024" stroke="#e1e1e1" stroke-width="1"/>
<path d="M0 278.10H25.5" stroke="#cfcfcf" stroke-width="1"/>
<path d="M25.5 296.40H1024" stroke="#e1e1e1" stroke-width="1"/>
<path d="M0 296.40H25.5" stroke="#cfcfcf" stroke-width="1"/>
<path d="M25.5 314.70H1024" stroke="#e1e1e1" stroke-width="1"/>
<path d="M0 314.70H25.5" stroke="#cfcfcf" stroke-width="1"/>
<path d="M25.5 333.00H1024" stroke="#e1e1e1" stroke-width="1"/>
<path d="M0 333.00H25.5" stroke="#cfcfcf" stroke-width="1"/>
<path d="M25.5 351.30H1024" stroke="#e1e1e1" stroke-width="1"/>
<path d="M0 351.30H25.5" stroke="#cfcfcf" stroke-width="1"/>
<path d="M25.5 369.60H1024" stroke="#e1e1e1" stroke-width="1"/>
<path d="M0 369.60H25.5" stroke="#cfcfcf" stroke-width="1"/>
<path d="M25.5 387.90H1024" stroke="#e1e1e1" stroke-width="1"/>
<path d="M0 387.90H25.5" stroke="#cfcfcf" stroke-width="1"/>
<path d="M25.5 406.20H1024" stroke="#e1e1e1" stroke-width="1"/>
<path d="M0 406.20H25.5" stroke="#cfcfcf" stroke-width="1"/>
<path d="M25.5 424.50H1024" stroke="#e1e1e1" stroke-width="1"/>
<path d="M0 424.50H25.5" stroke="#cfcfcf" stroke-width="1"/>
<path d="M25.5 442.80H1024" stroke="#e1e1e1" stroke-width="1"/>
<path d="M0 442.80H25.5" stroke="#cfcfcf" stroke-width="1"/>
<path d="M25.5 461.10H1024" stroke="#e1e1e1" stroke-width="1"/>
<path d="M0 461.10H25.5" stroke="#cfcfcf" stroke-width="1"/>
<path d="M25.5 479.40H1024" stroke="#e1e1e1" stroke-width="1"/>
<path d="M0 479.40H25.5" stroke="#cfcfcf" stroke-width="1"/>
<path d="M25.5 497.70H1024" stroke="#e1e1e1" stroke-width="1"/>
<path d="M0 497.70H25.5" stroke="#cfcfcf" stroke-width="1"/>
<path d="M25.5 516.00H1024" stroke="#e1e1e1" stroke-width="1"/>
<path d="M0 516.00H25.5" stroke="#cfcfcf" stroke-width="1"/>
<path d="M0 222.7H1024" stroke="#bdbdbd" stroke-width="1"/>
<path d="M25.5 206V498" stroke="#bdbdbd" stroke-width="1"/>
</svg>
<svg class="a" style="left:10px;top:207px" width="14" height="14" viewBox="0 0 14 14"><path d="M13 1V13H1Z" fill="#c4c4c4"/></svg>
<div class="t" style="left:51.58px;top:208.00px;font-size:12.5px;letter-spacing:0.000px;color:#333;">A</div>
<div class="t" style="left:124.83px;top:208.00px;font-size:12.5px;letter-spacing:0.000px;color:#1e6e43;">B</div>
<div class="t" style="left:197.86px;top:208.00px;font-size:12.5px;letter-spacing:0.000px;color:#333;">C</div>
<div class="t" style="left:258.61px;top:208.00px;font-size:12.5px;letter-spacing:0.000px;color:#333;">D</div>
<div class="t" style="left:319.71px;top:208.00px;font-size:12.5px;letter-spacing:0.000px;color:#333;">E</div>
<div class="t" style="left:380.81px;top:208.00px;font-size:12.5px;letter-spacing:0.000px;color:#333;">F</div>
<div class="t" style="left:440.51px;top:208.00px;font-size:12.5px;letter-spacing:0.000px;color:#333;">G</div>
<div class="t" style="left:501.61px;top:208.00px;font-size:12.5px;letter-spacing:0.000px;color:#333;">H</div>
<div class="t" style="left:565.14px;top:208.00px;font-size:12.5px;letter-spacing:0.000px;color:#333;">I</div>
<div class="t" style="left:624.50px;top:208.00px;font-size:12.5px;letter-spacing:0.000px;color:#333;">J</div>
<div class="t" style="left:684.21px;top:208.00px;font-size:12.5px;letter-spacing:0.000px;color:#333;">K</div>
<div class="t" style="left:745.65px;top:208.00px;font-size:12.5px;letter-spacing:0.000px;color:#333;">L</div>
<div class="t" style="left:804.67px;top:208.00px;font-size:12.5px;letter-spacing:0.000px;color:#333;">M</div>
<div class="t" style="left:866.11px;top:208.00px;font-size:12.5px;letter-spacing:0.000px;color:#333;">N</div>
<div class="t" style="left:926.51px;top:208.00px;font-size:12.5px;letter-spacing:0.000px;color:#333;">O</div>
<div class="t" style="left:987.96px;top:208.00px;font-size:12.5px;letter-spacing:0.000px;color:#333;">P</div>
<div class="a" style="left:86px;top:221.2px;width:86px;height:2px;background:#217346"></div>
<div class="t" style="left:9.22px;top:227.00px;font-size:12.5px;letter-spacing:0.000px;color:#333;">1</div>
<div class="t" style="left:9.22px;top:245.00px;font-size:12.5px;letter-spacing:0.000px;color:#333;">2</div>
<div class="t" style="left:9.22px;top:263.00px;font-size:12.5px;letter-spacing:0.000px;color:#1e6e43;">3</div>
<div class="t" style="left:9.22px;top:281.00px;font-size:12.5px;letter-spacing:0.000px;color:#1e6e43;">4</div>
<div class="t" style="left:9.22px;top:300.00px;font-size:12.5px;letter-spacing:0.000px;color:#1e6e43;">5</div>
<div class="t" style="left:9.22px;top:318.00px;font-size:12.5px;letter-spacing:0.000px;color:#1e6e43;">6</div>
<div class="t" style="left:9.22px;top:336.00px;font-size:12.5px;letter-spacing:0.000px;color:#1e6e43;">7</div>
<div class="t" style="left:9.22px;top:355.00px;font-size:12.5px;letter-spacing:0.000px;color:#1e6e43;">8</div>
<div class="t" style="left:9.22px;top:373.00px;font-size:12.5px;letter-spacing:0.000px;color:#1e6e43;">9</div>
<div class="t" style="left:5.75px;top:391.00px;font-size:12.5px;letter-spacing:0.000px;color:#1e6e43;">10</div>
<div class="t" style="left:6.21px;top:409.00px;font-size:12.5px;letter-spacing:0.000px;color:#333;">11</div>
<div class="t" style="left:5.75px;top:428.00px;font-size:12.5px;letter-spacing:0.000px;color:#333;">12</div>
<div class="t" style="left:5.75px;top:446.00px;font-size:12.5px;letter-spacing:0.000px;color:#333;">13</div>
<div class="t" style="left:5.75px;top:464.00px;font-size:12.5px;letter-spacing:0.000px;color:#333;">14</div>
<div class="t" style="left:5.75px;top:483.00px;font-size:12.5px;letter-spacing:0.000px;color:#333;">15</div>
<div class="a" style="left:24.2px;top:259.8px;width:2px;height:146.4px;background:#217346"></div>
<div class="a" style="left:86.5px;top:242.0px;width:85.5px;height:17.8px;background:#00b050"></div>
<div class="t" style="left:89.60px;top:245.00px;font-size:12px;letter-spacing:-0.088px;color:#fff;font-weight:bold;">Numbers</div>
<div class="a" style="left:87px;top:278.1px;width:84px;height:128.1px;background:#c6c6c6"></div>
<div class="a" style="left:87px;top:278.1px;width:84px;height:1px;background:#dadada"></div>
<div class="a" style="left:87px;top:296.40000000000003px;width:84px;height:1px;background:#dadada"></div>
<div class="a" style="left:87px;top:314.70000000000005px;width:84px;height:1px;background:#dadada"></div>
<div class="a" style="left:87px;top:333.0px;width:84px;height:1px;background:#dadada"></div>
<div class="a" style="left:87px;top:351.3px;width:84px;height:1px;background:#dadada"></div>
<div class="a" style="left:87px;top:369.6px;width:84px;height:1px;background:#dadada"></div>
<div class="a" style="left:87px;top:387.9px;width:84px;height:1px;background:#dadada"></div>
<div class="a" style="left:86px;top:259.3px;width:86.5px;height:147.9px;border:2px solid #217346"></div>
<div class="a" style="left:170px;top:404.70000000000005px;width:4px;height:4px;background:#217346;border:1px solid #fff"></div>
<div class="t" style="right:855.60px;top:263.00px;font-size:12.5px;letter-spacing:-0.185px;color:#000;">-$436.81</div>
<div class="t" style="right:855.60px;top:281.00px;font-size:12.5px;letter-spacing:-0.188px;color:#000;">$13,134.99</div>
<div class="t" style="right:855.60px;top:300.00px;font-size:12.5px;letter-spacing:-0.179px;color:#000;">-$2,256.49</div>
<div class="t" style="right:855.60px;top:318.00px;font-size:12.5px;letter-spacing:-0.185px;color:#000;">-$308.95</div>
<div class="t" style="right:855.60px;top:336.00px;font-size:12.5px;letter-spacing:-0.185px;color:#000;">$7,121.72</div>
<div class="t" style="right:855.60px;top:355.00px;font-size:12.5px;letter-spacing:-0.188px;color:#000;">$0.00</div>
<div class="t" style="right:855.60px;top:373.00px;font-size:12.5px;letter-spacing:-0.179px;color:#000;">-$3,672.98</div>
<div class="t" style="right:855.60px;top:391.00px;font-size:12.5px;letter-spacing:-0.185px;color:#000;">$2,227.63</div>
<div class="a" style="left:764.2px;top:151px;width:183.1px;height:314px;background:#fff;border:1px solid #d4d4d4;box-shadow:1px 1px 3px rgba(0,0,0,.12)"></div>
<svg class="a" style="left:779px;top:163px" width="31" height="28" viewBox="0 0 31 28">
<rect x="1.2" y="1.2" width="26.3" height="20.2" fill="#fff" stroke="#666" stroke-width="1.2"/>
<path d="M8.4 1.2V21.4 M20.8 1.2V21.4 M1.2 7.9H27.5 M1.2 14.4H27.5" stroke="#666" stroke-width="1.1"/>
<rect x="8.4" y="7.9" width="12.4" height="6.5" fill="#fbd59b" stroke="#ef8b2c" stroke-width="1.2"/>
<rect x="12.4" y="13" width="17.4" height="13.6" rx="1" fill="#fff" stroke="#555" stroke-width="1.3"/>
<path d="M23.7 16.3L18.2 19L23.7 21.7 M18.2 23.4H23.7" fill="none" stroke="#444" stroke-width="1.1"/>
</svg>
<div class="t" style="left:815.60px;top:171.00px;font-size:12px;letter-spacing:-0.081px;color:#222;-webkit-text-stroke:0.7px #222;">Highlight Cells Rules</div>
<div class="a" style="left:815.60px;top:183.00px;width:8.62px;height:1px;background:#222"></div>
<svg class="a" style="left:932.5px;top:169.5px" width="7" height="10" viewBox="0 0 7 10"><path d="M1 1L5.5 5L1 9" fill="none" stroke="#444" stroke-width="1.1"/></svg>
<svg class="a" style="left:779px;top:208px" width="31" height="28" viewBox="0 0 31 28">
<rect x="1.2" y="1.2" width="26.3" height="20.2" fill="#fff" stroke="#666" stroke-width="1.2"/>
<path d="M1.2 7.9H27.5 M1.2 14.4H27.5" stroke="#666" stroke-width="1.1"/>
<rect x="8.2" y="1.2" width="12.6" height="20.2" fill="#fbd59b" stroke="#ef8b2c" stroke-width="1.2"/>
<path d="M13.8 12.4V3.6 M10.4 7.2L13.8 3.6L17.2 7.2" fill="none" stroke="#555" stroke-width="1.2"/>
<rect x="12.4" y="13.1" width="17.4" height="13.5" rx="1" fill="#fff" stroke="#555" stroke-width="1.3"/>
<text x="16.2" y="23.7" font-size="10.5" font-family="Liberation Sans" fill="#555" letter-spacing="-0.6">10</text>
</svg>
<div class="t" style="left:815.60px;top:215.00px;font-size:12px;letter-spacing:0.268px;color:#222;-webkit-text-stroke:0.7px #222;">Top/Bottom Rules</div>
<div class="a" style="left:815.60px;top:227.20px;width:7.46px;height:1px;background:#222"></div>
<svg class="a" style="left:932.5px;top:214px" width="7" height="10" viewBox="0 0 7 10"><path d="M1 1L5.5 5L1 9" fill="none" stroke="#444" stroke-width="1.1"/></svg>
<div class="a" style="left:807px;top:242.3px;width:140px;height:1px;background:#e1e1e1"></div>
<svg class="a" style="left:779px;top:255px" width="29" height="23" viewBox="0 0 29 23">
<rect x="1.2" y="1.2" width="26.5" height="20.5" fill="#fff" stroke="#555" stroke-width="1.2"/>
<path d="M6 1.2V21.7 M22.6 1.2V21.7 M1.2 8H27.7 M1.2 14.4H27.7" stroke="#555" stroke-width="1.1"/>
<rect x="6" y="1.5" width="8.2" height="6.5" fill="#7ab4ea" stroke="#2f86d6" stroke-width="1.2"/>
<rect x="6" y="8" width="3.7" height="6.4" fill="#7ab4ea" stroke="#2f86d6" stroke-width="1.2"/>
<rect x="6" y="14.4" width="6.5" height="7" fill="#7ab4ea" stroke="#2f86d6" stroke-width="1.2"/>
</svg>
<div class="t" style="left:815.50px;top:262.00px;font-size:12px;letter-spacing:-0.184px;color:#222;-webkit-text-stroke:0.7px #222;">Data Bars</div>
<div class="a" style="left:815.50px;top:274.70px;width:8.57px;height:1px;background:#222"></div>
<svg class="a" style="left:932.5px;top:261.5px" width="7" height="10" viewBox="0 0 7 10"><path d="M1 1L5.5 5L1 9" fill="none" stroke="#444" stroke-width="1.1"/></svg>
<svg class="a" style="left:779px;top:300px" width="29" height="23" viewBox="0 0 29 23">
<rect x="1.2" y="1.2" width="26.5" height="20.5" fill="#fff" stroke="#555" stroke-width="1.2"/>
<path d="M1.2 8.2H27.7 M1.2 14.2H27.7" stroke="#555" stroke-width="1.1"/>
<rect x="6" y="1.5" width="16.9" height="6.7" fill="#7ab4ea" stroke="#2f86d6" stroke-width="1.2"/>
<rect x="6" y="8.2" width="16.9" height="6" fill="#fbd59b" stroke="#ef8b2c" stroke-width="1.1"/>
<rect x="6" y="14.2" width="16.9" height="7.2" fill="#f59aa2" stroke="#e0414f" stroke-width="1.2"/>
</svg>
<div class="t" style="left:815.50px;top:307.00px;font-size:12px;letter-spacing:-0.419px;color:#222;-webkit-text-stroke:0.7px #222;">Color Scales</div>
<div class="a" style="left:845.00px;top:319.50px;width:7.80px;height:1px;background:#222"></div>
<svg class="a" style="left:932.5px;top:306px" width="7" height="10" viewBox="0 0 7 10"><path d="M1 1L5.5 5L1 9" fill="none" stroke="#444" stroke-width="1.1"/></svg>
<svg class="a" style="left:779px;top:345px" width="29" height="23" viewBox="0 0 29 23">
<rect x="1.2" y="1.2" width="26.5" height="20.5" fill="#fff" stroke="#555" stroke-width="1.3"/>
<path d="M6.3 1.2V21.7 M22.6 1.2V21.7 M1.2 8H27.7 M1.2 14.4H27.7" stroke="#555" stroke-width="1.2"/>
<circle cx="9.1" cy="4.4" r="1.7" fill="#2f86d6"/><circle cx="9.1" cy="10.9" r="1.7" fill="#e81123"/><circle cx="9.1" cy="17.4" r="1.7" fill="#2f86d6"/>
<path d="M16.1 4.6H20.9 M16.1 11.1H20.9 M16.1 17.6H20.9" stroke="#666" stroke-width="1.1"/>
</svg>
<div class="t" style="left:815.50px;top:352.00px;font-size:12px;letter-spacing:-0.248px;color:#222;-webkit-text-stroke:0.7px #222;">Icon Sets</div>
<div class="a" style="left:815.50px;top:364.50px;width:3.21px;height:1px;background:#222"></div>
<svg class="a" style="left:932.5px;top:351px" width="7" height="10" viewBox="0 0 7 10"><path d="M1 1L5.5 5L1 9" fill="none" stroke="#444" stroke-width="1.1"/></svg>
<div class="a" style="left:807px;top:380px;width:140px;height:1px;background:#e1e1e1"></div>
<div class="a" style="left:765.2px;top:382px;width:181px;height:27.4px;background:#d0d0d0"></div>
<svg class="a" style="left:775px;top:387px" width="17" height="15" viewBox="0 0 17 15">
<rect x="1" y="0.8" width="15.1" height="13.3" fill="#fff" stroke="#333" stroke-width="1.2"/>
<path d="M5.5 0.8V14.1 M11.6 0.8V14.1 M1 5H16.1 M1 9.6H16.1" stroke="#444" stroke-width="1"/>
<rect x="5.5" y="5" width="6.1" height="4.6" fill="#fbd59b" stroke="#ef8b2c" stroke-width="1.5"/>
</svg>
<div class="t" style="left:799.80px;top:389.00px;font-size:12px;letter-spacing:-0.711px;color:#333;">New Rule...</div>
<div class="a" style="left:799.80px;top:401.00px;width:8.31px;height:1px;background:#333"></div>
<svg class="a" style="left:775px;top:414px" width="18" height="17" viewBox="0 0 18 17">
<rect x="1.2" y="1.5" width="14.4" height="13" fill="#fff" stroke="#444" stroke-width="1.2"/>
<path d="M5 1.5V14.5 M11 1.5V14.5 M1.2 5.5H15.6 M1.2 10H15.6" stroke="#555" stroke-width="1"/>
<rect x="5" y="4" width="6" height="6" fill="#fbd59b" stroke="#ef8b2c" stroke-width="1.2"/>
<path d="M7.5 12.2L13 6.8L16.5 10.3L11 15.7Z" fill="#fff" stroke="#a23fc4" stroke-width="1.5"/>
<path d="M10.5 11.5L12.5 9.5" stroke="#a23fc4" stroke-width="1.1"/>
</svg>
<div class="t" style="left:799.80px;top:416.00px;font-size:12px;letter-spacing:-0.653px;color:#333;">Clear Rules</div>
<div class="a" style="left:799.80px;top:428.50px;width:8.34px;height:1px;background:#333"></div>
<svg class="a" style="left:932.5px;top:417.5px" width="7" height="10" viewBox="0 0 7 10"><path d="M1 1L5.5 5L1 9" fill="none" stroke="#444" stroke-width="1.1"/></svg>
<svg class="a" style="left:775px;top:441px" width="18" height="16" viewBox="0 0 18 16">
<path d="M1.3 14V1H14" fill="none" stroke="#666" stroke-width="1.1"/>
<rect x="3" y="2.6" width="13" height="12" fill="#fff" stroke="#444" stroke-width="1.2"/>
<path d="M7.3 2.6V14.6 M11.8 2.6V14.6 M3 6.5H16 M3 11H16" stroke="#555" stroke-width="1"/>
<rect x="7.3" y="6.5" width="4.5" height="4.5" fill="#fbd59b" stroke="#ef8b2c" stroke-width="1.3"/>
</svg>
<div class="t" style="left:799.80px;top:444.00px;font-size:12px;letter-spacing:-0.665px;color:#333;">Manage Rules...</div>
<div class="a" style="left:841.84px;top:456.20px;width:8.33px;height:1px;background:#333"></div>
<div class="a" style="left:55px;top:42.6px;width:56px;height:38.4px;border:4px solid #f4a60e"></div>
<div class="a" style="left:756.3px;top:71.8px;width:86.0px;height:85.60000000000001px;border:4px solid #f4a60e"></div>
<div class="a" style="left:760px;top:376.4px;width:129.39999999999998px;height:39.30000000000001px;border:4px solid #f4a60e"></div>
<div class="a" style="left:187.05px;top:305.25px;width:30.5px;height:30.5px;background:#f4a60e;border-radius:50%"></div>
<div class="t" style="left:196.32px;top:309.00px;font-size:21.5px;letter-spacing:0.000px;color:#fff;">1</div>
<div class="a" style="left:119.94999999999999px;top:27.15px;width:30.5px;height:30.5px;background:#f4a60e;border-radius:50%"></div>
<div class="t" style="left:129.22px;top:31.00px;font-size:21.5px;letter-spacing:0.000px;color:#fff;">2</div>
<div class="a" style="left:723.45px;top:43.25px;width:30.5px;height:30.5px;background:#f4a60e;border-radius:50%"></div>
<div class="t" style="left:732.72px;top:47.00px;font-size:21.5px;letter-spacing:0.000px;color:#fff;">3</div>
<div class="a" style="left:723.55px;top:381.35px;width:30.5px;height:30.5px;background:#f4a60e;border-radius:50%"></div>
<div class="t" style="left:732.82px;top:385.00px;font-size:21.5px;letter-spacing:0.000px;color:#fff;">4</div>
<svg class="a" style="left:864px;top:399px" width="12" height="17" viewBox="0 0 12 17"><path d="M1.4 1V13.3L4.3 10.6L6.5 15.3L8.4 14.4L6.3 9.9H10.2Z" fill="#fff" stroke="#222" stroke-width="1" stroke-linejoin="round"/></svg>
</body></html>
